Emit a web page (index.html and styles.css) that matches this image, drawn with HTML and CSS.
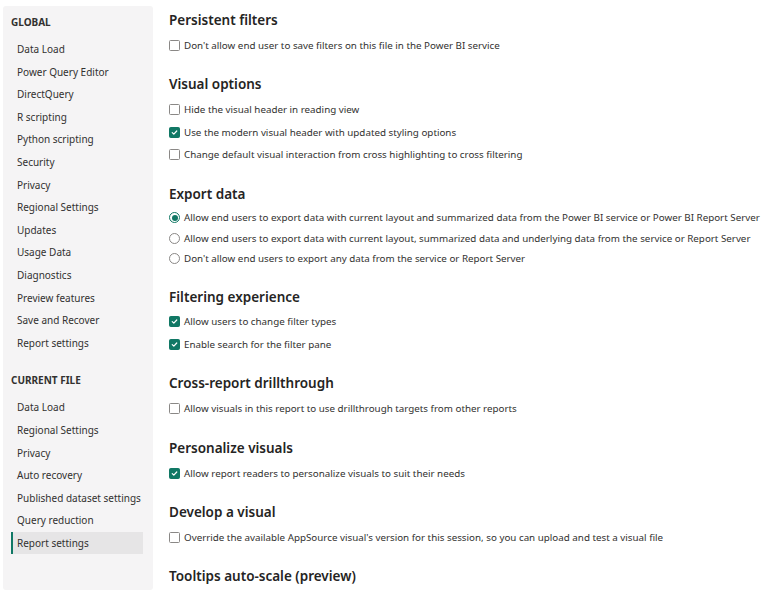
FILE: index.html
```html
<!DOCTYPE html>
<html>
<head>
<meta charset="utf-8">
<link rel="stylesheet" href="styles.css">
</head>
<body>
<div class="app">
  <nav class="sidebar">
    <div class="group-title first">GLOBAL</div>
    <div class="item">Data Load</div>
    <div class="item">Power Query Editor</div>
    <div class="item">DirectQuery</div>
    <div class="item">R scripting</div>
    <div class="item">Python scripting</div>
    <div class="item">Security</div>
    <div class="item">Privacy</div>
    <div class="item">Regional Settings</div>
    <div class="item">Updates</div>
    <div class="item">Usage Data</div>
    <div class="item">Diagnostics</div>
    <div class="item">Preview features</div>
    <div class="item">Save and Recover</div>
    <div class="item">Report settings</div>
    <div class="group-title second">CURRENT FILE</div>
    <div class="item">Data Load</div>
    <div class="item">Regional Settings</div>
    <div class="item">Privacy</div>
    <div class="item">Auto recovery</div>
    <div class="item">Published dataset settings</div>
    <div class="item">Query reduction</div>
    <div class="item selected">Report settings</div>
  </nav>
  <main class="content">
    <section class="section">
      <h2>Persistent filters</h2>
      <label class="row"><span class="cb"></span>Don't allow end user to save filters on this file in the Power BI service</label>
    </section>
    <section class="section">
      <h2>Visual options</h2>
      <label class="row"><span class="cb"></span>Hide the visual header in reading view</label>
      <label class="row"><span class="cb on"><svg viewBox="0 0 12 12"><path d="M3 6.2 L5.1 8.2 L9 4" fill="none" stroke="#fff" stroke-width="1.6" stroke-linecap="round" stroke-linejoin="round"/></svg></span>Use the modern visual header with updated styling options</label>
      <label class="row"><span class="cb"></span>Change default visual interaction from cross highlighting to cross filtering</label>
    </section>
    <section class="section">
      <h2>Export data</h2>
      <label class="row radio-row"><span class="rb on"></span>Allow end users to export data with current layout and summarized data from the Power BI service or Power BI Report Server</label>
      <label class="row radio-row"><span class="rb"></span>Allow end users to export data with current layout, summarized data and underlying data from the service or Report Server</label>
      <label class="row radio-row"><span class="rb"></span>Don't allow end users to export any data from the service or Report Server</label>
    </section>
    <section class="section">
      <h2>Filtering experience</h2>
      <label class="row"><span class="cb on"><svg viewBox="0 0 12 12"><path d="M3 6.2 L5.1 8.2 L9 4" fill="none" stroke="#fff" stroke-width="1.6" stroke-linecap="round" stroke-linejoin="round"/></svg></span>Allow users to change filter types</label>
      <label class="row"><span class="cb on"><svg viewBox="0 0 12 12"><path d="M3 6.2 L5.1 8.2 L9 4" fill="none" stroke="#fff" stroke-width="1.6" stroke-linecap="round" stroke-linejoin="round"/></svg></span>Enable search for the filter pane</label>
    </section>
    <section class="section">
      <h2>Cross-report drillthrough</h2>
      <label class="row"><span class="cb"></span>Allow visuals in this report to use drillthrough targets from other reports</label>
    </section>
    <section class="section">
      <h2>Personalize visuals</h2>
      <label class="row"><span class="cb on"><svg viewBox="0 0 12 12"><path d="M3 6.2 L5.1 8.2 L9 4" fill="none" stroke="#fff" stroke-width="1.6" stroke-linecap="round" stroke-linejoin="round"/></svg></span>Allow report readers to personalize visuals to suit their needs</label>
    </section>
    <section class="section">
      <h2>Develop a visual</h2>
      <label class="row"><span class="cb"></span>Override the available AppSource visual's version for this session, so you can upload and test a visual file</label>
    </section>
    <section class="section">
      <h2>Tooltips auto-scale (preview)</h2>
    </section>
  </main>
</div>
</body>
</html>
```

FILE: styles.css
```css
html, body {
  margin: 0;
  padding: 0;
  background: #ffffff;
  width: 767px;
  height: 596px;
  overflow: hidden;
}
body {
  font-family: "Noto Sans", "Open Sans", sans-serif;
  color: #323130;
}
.app {
  display: flex;
  align-items: flex-start;
  padding: 6px 0 0 3px;
}
.sidebar {
  width: 150px;
  height: 584px;
  box-sizing: border-box;
  background: #f5f4f5;
  border-radius: 3px;
  padding: 0 10px 0 8px;
  display: flex;
  flex-direction: column;
  flex-shrink: 0;
}
.group-title {
  font-size: 10px;
  font-weight: 700;
  color: #323130;
  line-height: 14px;
}
.group-title.first {
  margin-top: 9px;
  margin-bottom: 9px;
}
.group-title.second {
  margin-top: 19px;
  margin-bottom: 9px;
}
.item {
  font-size: 10px;
  line-height: 22.6px;
  height: 22.6px;
  padding-left: 6px;
  color: #323130;
  white-space: nowrap;
}
.item.selected {
  background: #e6e5e6;
  border-left: 2px solid #117865;
  padding-left: 4px;
}
.content {
  flex: 1;
  padding: 4px 0 0 16px;
  display: flex;
  flex-direction: column;
}
.section {
  display: flex;
  flex-direction: column;
  margin-bottom: 17.7px;
}
h2 {
  margin: 0 0 4px 0;
  font-size: 13.5px;
  font-weight: 600;
  line-height: 20px;
  color: #252423;
}
.row {
  display: flex;
  align-items: center;
  height: 22.6px;
  font-size: 9.8px;
  color: #323130;
  white-space: nowrap;
}
.radio-row {
  height: 20.4px;
}
.cb {
  width: 9px;
  height: 9px;
  border: 1px solid #8a8886;
  border-radius: 1.5px;
  margin-right: 4px;
  flex-shrink: 0;
  display: flex;
  align-items: center;
  justify-content: center;
}
.cb.on {
  background: #117865;
  border-color: #117865;
}
.cb svg {
  width: 11px;
  height: 11px;
}
.rb {
  width: 9px;
  height: 9px;
  border: 1px solid #8a8886;
  border-radius: 50%;
  margin-right: 4px;
  flex-shrink: 0;
  position: relative;
}
.rb.on {
  border-color: #117865;
}
.rb.on::after {
  content: "";
  position: absolute;
  left: 1.5px;
  top: 1.5px;
  width: 6px;
  height: 6px;
  border-radius: 50%;
  background: #117865;
}
```
